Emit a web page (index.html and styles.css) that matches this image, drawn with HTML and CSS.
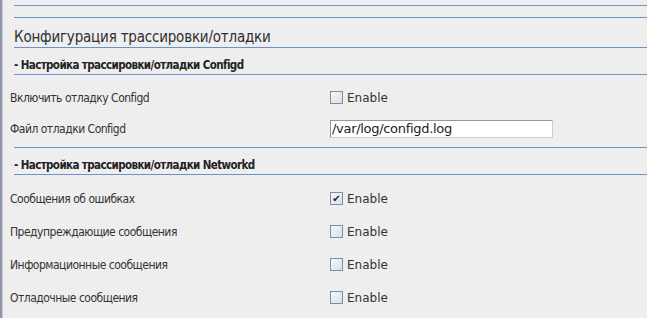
FILE: index.html
```html
<!DOCTYPE html>
<html lang="ru">
<head>
  <meta charset="UTF-8">
  <title>Конфигурация трассировки/отладки</title>
  <link rel="stylesheet" href="styles.css">
</head>
<body>
  <div class="frame">
    <div class="rule first"></div>
    <div class="rule"></div>

    <h1 class="title">Конфигурация трассировки/отладки</h1>

    <h2 class="subtitle">- Настройка трассировки/отладки Configd</h2>
    <div class="rows short">
      <div class="row">
        <span class="label">Включить отладку Configd</span>
        <label class="check"><span class="box"></span>Enable</label>
      </div>
      <div class="row">
        <span class="label">Файл отладки Configd</span>
        <input class="field" type="text" value="/var/log/configd.log">
      </div>
    </div>

    <h2 class="subtitle">- Настройка трассировки/отладки Networkd</h2>
    <div class="rows">
      <div class="row">
        <span class="label">Сообщения об ошибках</span>
        <label class="check"><span class="box checked">&#10004;</span>Enable</label>
      </div>
      <div class="row">
        <span class="label">Предупреждающие сообщения</span>
        <label class="check"><span class="box"></span>Enable</label>
      </div>
      <div class="row">
        <span class="label">Информационные сообщения</span>
        <label class="check"><span class="box"></span>Enable</label>
      </div>
      <div class="row">
        <span class="label">Отладочные сообщения</span>
        <label class="check"><span class="box"></span>Enable</label>
      </div>
    </div>
  </div>
</body>
</html>
```

FILE: styles.css
```css
* { box-sizing: border-box; }
html, body {
  margin: 0;
  height: 100%;
  overflow: hidden;
}
body {
  background: #eeeeee;
  color: #333333;
  font-family: 'DejaVu Sans', sans-serif;
  font-size: 12px;
}
.frame {
  min-height: 100%;
  border-left: 2px solid #8c95a6;
  box-shadow: inset 1px 0 0 #c9cdd5;
  padding-top: 5px;
}
.rule {
  height: 1px;
  margin-left: 12px;
  background: #6f8fcb;
}
.rule + .rule {
  margin-top: 11px;
}
.title {
  margin: 0 0 0 12px;
  height: 30px;
  padding-top: 11px;
  border-bottom: 1px solid #6f8fcb;
  font-family: 'DejaVu Sans Condensed', 'DejaVu Sans', sans-serif;
  font-size: 15px;
  font-weight: normal;
  letter-spacing: -0.2px;
  line-height: 16px;
  color: #2f2f2f;
}
.subtitle {
  margin: 0 0 0 12px;
  height: 27px;
  padding-top: 10px;
  border-bottom: 1px solid #6f8fcb;
  font-family: 'DejaVu Sans Condensed', 'DejaVu Sans', sans-serif;
  font-size: 11.5px;
  font-weight: bold;
  letter-spacing: -0.6px;
  line-height: 14px;
  color: #222222;
}
.rows {
  padding-top: 7px;
}
.rows.short {
  margin-left: 12px;
  padding-bottom: 3px;
  border-bottom: 1px solid #6f8fcb;
}
.row {
  display: grid;
  grid-template-columns: 320px 1fr;
  align-items: center;
  height: 33px;
  padding-left: 8px;
}
.rows.short .row {
  height: 31px;
  margin-left: -12px;
}
.label {
  font-family: 'DejaVu Sans Condensed', 'DejaVu Sans', sans-serif;
  letter-spacing: -0.5px;
  color: #333333;
}
.check {
  display: flex;
  align-items: center;
  gap: 4px;
  color: #333333;
}
.box {
  width: 13px;
  height: 13px;
  border: 1px solid #7e8da0;
  background: linear-gradient(135deg, #f6f8fb, #d7dfe9);
  font-size: 10px;
  line-height: 11px;
  text-align: center;
  color: #222222;
}
.field {
  width: 223px;
  height: 18px;
  margin: 0;
  padding: 0 0 0 1px;
  border: 1px solid #8a99ab;
  border-right-color: #c8cfd8;
  border-bottom-color: #c8cfd8;
  background: #ffffff;
  font-family: 'DejaVu Sans', sans-serif;
  font-size: 13px;
  letter-spacing: -0.3px;
  color: #222222;
  outline: none;
}
```
